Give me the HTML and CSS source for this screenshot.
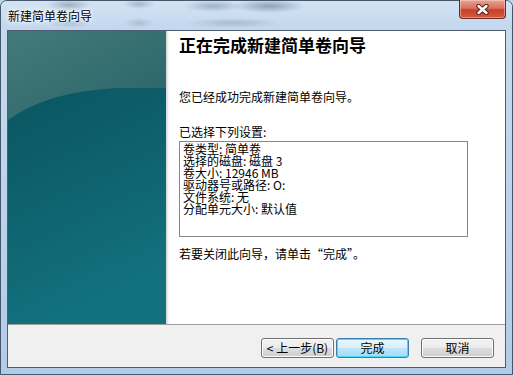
FILE: index.html
```html
<!DOCTYPE html>
<html lang="zh-CN">
<head>
    <meta charset="UTF-8">
    <title>新建简单卷向导</title>
    <link rel="stylesheet" href="styles.css">
</head>
<body>
    <div class="window">
        <div class="titlebar">
            <span class="title">新建简单卷向导</span>
            <div class="close">
                <svg width="13" height="11" viewBox="0 0 13 11">
                    <path d="M2.5 2L10.5 9M10.5 2L2.5 9" stroke="#5b2216" stroke-width="4.4" stroke-linecap="round"/>
                    <path d="M2.5 2L10.5 9M10.5 2L2.5 9" stroke="#ffffff" stroke-width="2.4" stroke-linecap="round"/>
                </svg>
            </div>
        </div>
        <div class="client">
            <div class="wizard">
                <div class="banner">
                    <svg width="158" height="293" viewBox="0 0 158 293">
                        <defs>
                            <linearGradient id="deep" x1="0" y1="0" x2="0.25" y2="1">
                                <stop offset="0" stop-color="#09505b"/>
                                <stop offset="0.5" stop-color="#0d5f6b"/>
                                <stop offset="1" stop-color="#12717d"/>
                            </linearGradient>
                            <linearGradient id="glow" x1="0" y1="0" x2="1" y2="1">
                                <stop offset="0" stop-color="#437a79"/>
                                <stop offset="1" stop-color="#2a6469"/>
                            </linearGradient>
                        </defs>
                        <rect width="158" height="293" fill="url(#deep)"/>
                        <path d="M0 0H158V57H110Q40 60 0 89Z" fill="url(#glow)"/>
                    </svg>
                </div>
                <div class="edge"></div>
                <div class="content">
                    <h1>正在完成新建简单卷向导</h1>
                    <p class="lead">您已经成功完成新建简单卷向导。</p>
                    <p class="label">已选择下列设置:</p>
                    <div class="summary">
                        <div>卷类型: 简单卷</div>
                        <div>选择的磁盘: 磁盘 3</div>
                        <div>卷大小: 12946 MB</div>
                        <div>驱动器号或路径: O:</div>
                        <div>文件系统: 无</div>
                        <div>分配单元大小: 默认值</div>
                    </div>
                    <p class="hint">若要关闭此向导，请单击“完成”。</p>
                </div>
            </div>
            <div class="buttons">
                <button class="back">&lt; 上一步(B)</button>
                <button class="default">完成</button>
                <button class="cancel">取消</button>
            </div>
        </div>
    </div>
</body>
</html>
```

FILE: styles.css
```css
body {
    margin: 0;
    width: 513px;
    height: 375px;
    overflow: hidden;
    font-family: "Noto Sans CJK SC", "Liberation Sans", sans-serif;
    font-size: 12px;
    color: #000;
    background: #bcd3ea;
}
.window {
    box-sizing: border-box;
    width: 513px;
    height: 375px;
    border: 1px solid #44576b;
    border-radius: 7px 7px 0 0;
    padding: 0 6px 6px;
    display: flex;
    flex-direction: column;
    background: linear-gradient(to bottom, #c8dcef, #b2cce8);
}
.titlebar {
    height: 29px;
    display: flex;
    align-items: flex-start;
    margin: 0 -6px;
    padding: 0 6px;
    border-radius: 6px 6px 0 0;
    background:
        radial-gradient(ellipse 22px 6px at 68px 4px, rgba(110, 130, 150, 0.55), transparent),
        radial-gradient(ellipse 16px 5px at 138px 3px, rgba(110, 130, 150, 0.45), transparent),
        radial-gradient(ellipse 30px 6px at 212px 5px, rgba(110, 130, 150, 0.5), transparent),
        radial-gradient(ellipse 36px 7px at 268px 5px, rgba(100, 120, 145, 0.6), transparent),
        radial-gradient(ellipse 22px 5px at 68px 22px, rgba(110, 130, 150, 0.35), transparent),
        radial-gradient(ellipse 16px 5px at 138px 22px, rgba(110, 130, 150, 0.3), transparent),
        radial-gradient(ellipse 48px 5px at 232px 22px, rgba(110, 130, 150, 0.35), transparent),
        linear-gradient(to bottom, #d3e3f3, #c1d7ee);
}
.title {
    margin: 8px 0 0 1px;
    line-height: 14px;
    text-shadow: 0 0 4px #fff, 0 0 8px #fff, 0 0 2px #fff;
}
.close {
    margin-left: auto;
    margin-top: -1px;
    width: 47px;
    height: 19px;
    box-sizing: border-box;
    display: flex;
    align-items: center;
    justify-content: center;
    border: 1px solid #6a2a1e;
    border-top: none;
    border-radius: 0 0 4px 4px;
    background: linear-gradient(to bottom, #e7a497 0%, #d9705a 45%, #c8402a 55%, #d45a40 100%);
    box-shadow: inset 0 0 0 1px rgba(255, 220, 210, 0.45);
}
.client {
    box-sizing: border-box;
    height: 338px;
    border: 1px solid #4e5e70;
    background: #f0f0f0;
    display: flex;
    flex-direction: column;
}
.wizard {
    height: 293px;
    display: flex;
    background: #fff;
    border-bottom: 1px solid #a0a0a0;
}
.banner {
    width: 158px;
    height: 293px;
}
.banner svg {
    display: block;
}
.edge {
    width: 4px;
    background: linear-gradient(to right, #d2d2d2, #f6f6f6 60%, #fff);
}
.content {
    flex: 1;
    padding: 4px 0 0 9px;
}
h1 {
    margin: 0;
    font-size: 17px;
    font-weight: bold;
    line-height: 20px;
}
p {
    margin: 0;
    line-height: 14px;
}
.lead {
    margin-top: 35px;
}
.label {
    margin-top: 21px;
}
.summary {
    box-sizing: border-box;
    width: 289px;
    height: 96px;
    margin-top: 2px;
    padding: 1px 3px;
    border: 1px solid #828790;
    line-height: 12px;
}
.hint {
    margin-top: 10px;
}
.buttons {
    flex: 1;
    display: flex;
    justify-content: flex-end;
    align-items: flex-start;
    padding: 13px 11px 0 0;
}
button {
    box-sizing: border-box;
    width: 73px;
    height: 20px;
    padding: 0;
    font-family: "Noto Sans CJK SC", "Liberation Sans", sans-serif;
    font-size: 12px;
    line-height: 16px;
    color: #000;
    border: 1px solid #707070;
    border-radius: 3px;
    background: linear-gradient(to bottom, #f2f2f2 0%, #ebebeb 50%, #dddddd 50%, #cfcfcf 100%);
    box-shadow: inset 0 0 0 1px #fcfcfc;
}
.back {
    margin-right: 2px;
}
.default {
    margin-right: 12px;
    border-color: #3c7fb1;
    background: linear-gradient(to bottom, #eaf6fd 0%, #d9f0fc 50%, #bee6fd 50%, #a7d9f5 100%);
    box-shadow: inset 0 0 0 1px #48d8fb;
}
```
